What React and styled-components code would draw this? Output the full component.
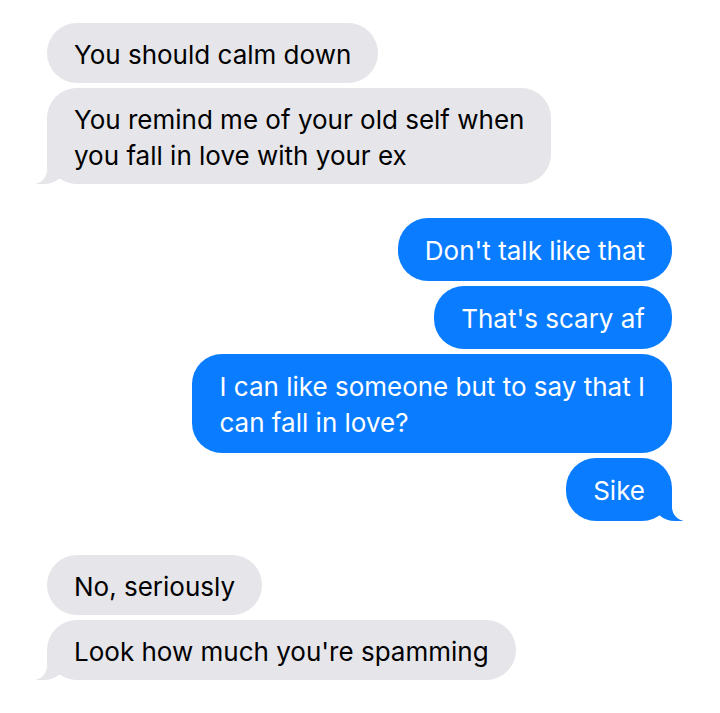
import styled, { createGlobalStyle } from "styled-components";

const GlobalStyle = createGlobalStyle`
  html, body {
    margin: 0;
    padding: 0;
    background: #fff;
  }
  body {
    font-family: Inter, "Liberation Sans", sans-serif;
  }
`;

const GRAY = "#e5e5ea";
const BLUE = "#0a7cff";

const Thread = styled.div`
  display: flex;
  flex-direction: column;
  gap: 34px;
  padding: 23px 48px 0 47px;
  width: 720px;
  box-sizing: border-box;
`;

const Group = styled.div`
  display: flex;
  flex-direction: column;
  align-items: ${(props) => (props.$mine ? "flex-end" : "flex-start")};
  gap: 5px;
`;

const Bubble = styled.div`
  position: relative;
  background: ${(props) => (props.$mine ? BLUE : GRAY)};
  color: ${(props) => (props.$mine ? "#fff" : "#000")};
  font-size: 26px;
  line-height: 36px;
  padding: ${(props) => (props.$mine ? "15px 27px 12px" : "14px 27px 10px")};
  border-radius: 30px;
  white-space: nowrap;

  ${(props) =>
    props.$tail &&
    (props.$mine
      ? `
    &::before {
      content: "";
      position: absolute;
      bottom: 0;
      right: -11px;
      width: 30px;
      height: 30px;
      background: ${BLUE};
      border-bottom-left-radius: 22px 20px;
    }
    &::after {
      content: "";
      position: absolute;
      bottom: 0;
      right: -30px;
      width: 30px;
      height: 30px;
      background: #fff;
      border-bottom-left-radius: 14px;
    }
  `
      : `
    &::before {
      content: "";
      position: absolute;
      bottom: 0;
      left: -11px;
      width: 30px;
      height: 30px;
      background: ${GRAY};
      border-bottom-right-radius: 22px 20px;
    }
    &::after {
      content: "";
      position: absolute;
      bottom: 0;
      left: -30px;
      width: 30px;
      height: 30px;
      background: #fff;
      border-bottom-right-radius: 14px;
    }
  `)}
`;

const Line = styled.span`
  position: relative;
  z-index: 2;
  display: block;
`;

const groups = [
  {
    mine: false,
    messages: [
      ["You should calm down"],
      ["You remind me of your old self when", "you fall in love with your ex"],
    ],
  },
  {
    mine: true,
    messages: [
      ["Don't talk like that"],
      ["That's scary af"],
      ["I can like someone but to say that I", "can fall in love?"],
      ["Sike"],
    ],
  },
  {
    mine: false,
    messages: [["No, seriously"], ["Look how much you're spamming"]],
  },
];

export default function App() {
  return (
    <>
      <GlobalStyle />
      <Thread>
        {groups.map((group, gi) => (
          <Group key={gi} $mine={group.mine}>
            {group.messages.map((lines, mi) => (
              <Bubble
                key={mi}
                $mine={group.mine}
                $tail={mi === group.messages.length - 1}
              >
                {lines.map((line, li) => (
                  <Line key={li}>{line}</Line>
                ))}
              </Bubble>
            ))}
          </Group>
        ))}
      </Thread>
    </>
  );
}
